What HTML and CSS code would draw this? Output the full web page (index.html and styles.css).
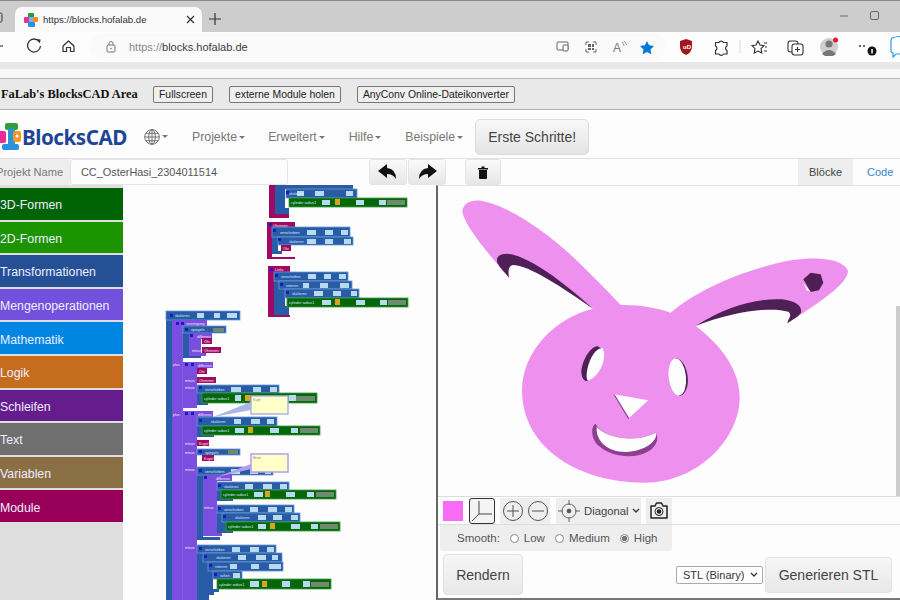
FILE: index.html
```html
<!DOCTYPE html>
<html lang="de">
<head>
<meta charset="utf-8">
<title>BlocksCAD</title>
<link rel="stylesheet" href="styles.css">
</head>
<body>
<div class="tabbar">
  <svg class="tab-stub" width="15" height="25" viewBox="0 0 15 25"><rect x="-6" y="6" width="8" height="9" rx="1.5" fill="none" stroke="#333"/></svg>
  <div class="tab">
    <svg class="favicon" width="14" height="14" viewBox="0 0 14 14"><rect x="4" y="0" width="6" height="5" rx="1" fill="#2c9a3f"/><rect x="0" y="4" width="5" height="6" rx="1" fill="#ea2d9a"/><rect x="9" y="4" width="5" height="5" rx="1" fill="#f28c28"/><rect x="4" y="9" width="7" height="5" rx="1" fill="#2b8fe0"/><rect x="5" y="4" width="4" height="5" fill="#6fb6e8"/></svg>
    <span class="tab-title">https://blocks.hofalab.de</span>
    <svg class="tab-x" width="9" height="9" viewBox="0 0 9 9"><path d="M1 1l7 7M8 1l-7 7" stroke="#333" stroke-width="1.2"/></svg>
  </div>
  <svg class="tab-plus" width="12" height="12" viewBox="0 0 12 12"><path d="M6 0v12M0 6h12" stroke="#333" stroke-width="1.2"/></svg>
  <div class="winbtns">
    <svg width="10" height="10" viewBox="0 0 10 10"><path d="M1 5h8" stroke="#666" stroke-width="1"/></svg>
    <svg width="10" height="10" viewBox="0 0 10 10"><rect x=".5" y=".5" width="8" height="8" rx="1.5" fill="none" stroke="#666"/></svg>
  </div>
</div>
<div class="toolbar">
  <svg class="nav-ico" width="90" height="30" viewBox="0 0 90 30">
    <path d="M-4 14h7" stroke="#444" stroke-width="1.2"/>
    <path d="M39.500 10a6.500 6.500 0 1 0 1 4" fill="none" stroke="#333" stroke-width="1.3"/><path d="M36.500 7l4 .5-.5 4z" fill="#333"/>
    <path d="M63 14l5.500-5 5.500 5v5.500h-3.500v-4h-4v4h-3.500z" fill="none" stroke="#333" stroke-width="1.2" stroke-linejoin="round"/>
  </svg>
  <div class="omni">
    <svg class="lock" width="10" height="12" viewBox="0 0 10 12"><rect x="1" y="4" width="8" height="7" rx="1" fill="none" stroke="#777"/><path d="M3 4V2.500a2 2 0 0 1 4 0V4" fill="none" stroke="#777"/><circle cx="5" cy="7.500" r=".8" fill="#777"/></svg>
    <span class="url"><span class="url-dim">https://</span>blocks.hofalab.de</span>
    <svg class="omni-ico" width="110" height="28" viewBox="555 32 110 28">
      <rect x="557" y="41" width="11" height="8" rx="1" fill="none" stroke="#666"/><rect x="563" y="44" width="5" height="6" rx="1" fill="#fff" stroke="#666"/>
      <path d="M586 44v-3h3M593 41h3v3M596 48v3h-3M589 51h-3v-3" fill="none" stroke="#666"/><rect x="588" y="43" width="3" height="3" fill="#666"/><rect x="592" y="43" width="2" height="3" fill="#666"/><rect x="588" y="47" width="3" height="2" fill="#666"/><rect x="592" y="47" width="2" height="2" fill="#666"/>
      <text class="aa" x="613" y="51">A</text><path d="M622 41q2 2 2 4M624 40q2.500 2 2.500 4" fill="none" stroke="#777" stroke-width=".8"/>
      <path d="M647 40l2.100 4.300 4.900.7-3.500 3.400.8 4.800-4.300-2.300-4.300 2.300.8-4.800-3.500-3.400 4.900-.7z" fill="#0078d4"/>
    </svg>
  </div>
  <svg class="ext-ico" width="235" height="30" viewBox="665 32 235 30">
    <path d="M680 41l6-2 6 2v6q0 5-6 8-6-3-6-8z" fill="#a3161c"/><text class="ub" x="683" y="49">uD</text>
    <path d="M715.500 42.500h3.500a2.500 2.500 0 0 1 4.500 0h3.500v3.500a2.500 2.500 0 0 0 0 4.500v3.500h-3.500a2.500 2.500 0 0 1-4.500 0h-3.500v-3.500a2.500 2.500 0 0 0 0-4.500z" fill="none" stroke="#333" stroke-width="1.200" stroke-linejoin="round"/>
    <path d="M740 40v13" stroke="#d6dbe6" stroke-width="1"/>
    <path d="M758 41l2 4 4 .6-3 3 .8 4.400-3.800-2-3.800 2 .8-4.400-3-3 4-.6zM764 43h3M765 47h2M764 51h3" fill="none" stroke="#333" stroke-width="1.100"/>
    <rect x="788" y="41" width="10" height="11" rx="2.500" fill="none" stroke="#333" stroke-width="1.100"/><rect x="792" y="44" width="11" height="11" rx="2.500" fill="#fff" stroke="#333" stroke-width="1.100"/><path d="M797.500 47v5M795 49.500h5" stroke="#333"/>
    <circle cx="829" cy="47" r="9" fill="#cfcfcf"/><circle cx="829" cy="44" r="3.600" fill="#777"/><path d="M822 54q7-8 14 0l-3 2h-8z" fill="#777"/><circle cx="835.500" cy="40" r="2.500" fill="#ee1b24"/>
    <circle cx="860" cy="46" r="1" fill="#333"/><circle cx="864" cy="46" r="1" fill="#333"/><circle cx="872" cy="51" r="4.500" fill="#111"/><rect x="871.300" y="49" width="1.500" height="4.500" fill="#fff"/>
    <path d="M892 38q8-3 12 0v16h-8l-3 3v-4q-2 0-2-3v-8q0-3 1-4z" fill="#fff" stroke="#2b9be8" stroke-width="1.200"/>
  </svg>
</div>
<div class="fav-gap"></div>
<div class="sitebar">
  <b class="site-title">FaLab's BlocksCAD Area</b>
  <button class="sbtn">Fullscreen</button>
  <button class="sbtn">externe Module holen</button>
  <button class="sbtn">AnyConv Online-Dateikonverter</button>
</div>
<nav class="nav">
  <svg class="logo" width="24" height="30" viewBox="0 0 24 30"><rect x="5" y="1" width="13" height="7" rx="2" fill="#2e9e3e"/><rect x="8" y="7" width="7" height="16" fill="#2a93dc"/><rect x="-3" y="9" width="9" height="12" rx="2" fill="#ea2a98"/><rect x="13" y="9" width="8" height="11" rx="2" fill="#f39a22"/><circle cx="17" cy="14" r="1.500" fill="#fff"/><rect x="2" y="22" width="17" height="6" rx="2" fill="#2a93dc"/></svg>
  <span class="brand">BlocksCAD</span>
  <svg class="globe" width="16" height="16" viewBox="0 0 16 16"><g fill="none" stroke="#666" stroke-width=".9"><circle cx="8" cy="8" r="7.300"/><ellipse cx="8" cy="8" rx="3.300" ry="7.300"/><path d="M8 .7v14.600M.7 8h14.600M1.800 4.300h12.400M1.800 11.700h12.400"/></g></svg><i class="caret"></i>
  <span class="nav-item first">Projekte<i class="caret"></i></span>
  <span class="nav-item">Erweitert<i class="caret"></i></span>
  <span class="nav-item hilfe">Hilfe<i class="caret"></i></span>
  <span class="nav-item">Beispiele<i class="caret"></i></span>
  <button class="start">Erste Schritte!</button>
</nav>
<div class="project">
  <span class="pname">Projekt Name</span>
  <span class="pinput">CC_OsterHasi_2304011514</span>
  <button class="pbtn undo"><svg width="20" height="16" viewBox="0 0 20 16"><path d="M9 0L0 7l9 7v-4q6 0 9 5 0-10-9-11z" fill="#111"/></svg></button>
  <button class="pbtn"><svg width="20" height="16" viewBox="0 0 20 16"><path d="M11 0l9 7-9 7v-4q-6 0-9 5 0-10 9-11z" fill="#111"/></svg></button>
  <button class="pbtn trash"><svg width="10" height="13" viewBox="0 0 10 13"><path d="M0 2h10v1.500H0zM3.500 .5h3V2h-3zM1 4h8v8a1 1 0 0 1-1 1H2a1 1 0 0 1-1-1z" fill="#111"/></svg></button>
  <span class="tab-active">Blöcke</span>
  <span class="tab-code">Code</span>
</div>
<main class="main">
  <aside class="toolbox">
    <div class="cat c1">3D-Formen</div>
    <div class="cat c2">2D-Formen</div>
    <div class="cat c3">Transformationen</div>
    <div class="cat c4">Mengenoperationen</div>
    <div class="cat c5">Mathematik</div>
    <div class="cat c6">Logik</div>
    <div class="cat c7">Schleifen</div>
    <div class="cat c8">Text</div>
    <div class="cat c9">Variablen</div>
    <div class="cat c10">Module</div>
  </aside>
  <section class="workspace">
    <svg class="blocks" width="313" height="415" viewBox="123 185 313 415">
      <!-- group 1 -->
      <path class="mag" d="M269 185h6v29h14v4h-20z"/>
      <path class="blu" d="M275 185h5v26h9v3h-14zM280 185h5v23h4v3h-9z"/>
      <rect class="blu" x="279" y="184" width="74" height="5"/>
      <g class="row"><rect class="blu" x="286" y="189" width="71" height="9"/><rect class="in" x="297" y="191" width="7" height="5"/><rect class="in" x="315" y="191" width="9" height="5"/><rect class="in" x="346" y="191" width="7" height="5"/><text x="289" y="195">skalieren</text></g>
      <g class="row"><rect class="grn" x="289" y="198" width="118" height="9"/><rect class="in" x="322" y="200" width="8" height="5"/><rect class="lk" x="335" y="199" width="5" height="6"/><rect class="in" x="356" y="200" width="8" height="5"/><rect class="in" x="379" y="200" width="7" height="5"/><rect class="gry" x="387" y="200" width="18" height="5"/><text x="291" y="204">cylinder radius1</text></g>
      <!-- group 2 -->
      <path class="mag" d="M267 222h28v6h-23v29h23v2h-28z"/>
      <text class="wt" x="273" y="226.500">Ohrinnen</text>
      <path class="blu" d="M272 237h6v14h4v3h-10z"/>
      <g class="row"><rect class="blu" x="272" y="227" width="78" height="10"/><rect class="in" x="307" y="230" width="9" height="5"/><rect class="in" x="325" y="230" width="8" height="5"/><rect class="in" x="341" y="230" width="7" height="5"/><text x="280" y="233.500">verschieben</text></g>
      <g class="row"><rect class="blu" x="278" y="237" width="75" height="8"/><rect class="in" x="307" y="239" width="9" height="5"/><rect class="in" x="325" y="239" width="8" height="5"/><rect class="in" x="344" y="239" width="7" height="5"/><text x="289" y="242.500">skalieren</text></g>
      <rect class="mag" x="281" y="245" width="10" height="6"/><text class="wt" x="283" y="249.500">Ohr</text>
      <!-- group 3 -->
      <path class="mag" d="M268 266h22v6h-16v43h16v2h-22z"/>
      <text class="wt" x="275" y="270.500">Links</text>
      <path class="blu" d="M274 281h5v28h10v6h-15zM279 289h6v17h4v3h-10z"/>
      <g class="row"><rect class="blu" x="274" y="272" width="74" height="9"/><rect class="in" x="308" y="274" width="8" height="5"/><rect class="in" x="324" y="274" width="7" height="5"/><rect class="in" x="339" y="274" width="7" height="5"/><text x="281" y="278">verschieben</text></g>
      <g class="row"><rect class="blu" x="279" y="281" width="73" height="8"/><rect class="in" x="303" y="283" width="6" height="5"/><rect class="in" x="320" y="283" width="8" height="5"/><rect class="in" x="340" y="283" width="9" height="5"/><text x="286" y="287">rotieren</text></g>
      <g class="row"><rect class="blu" x="285" y="289" width="74" height="9"/><rect class="in" x="314" y="291" width="9" height="5"/><rect class="in" x="333" y="291" width="8" height="5"/><rect class="in" x="351" y="291" width="6" height="5"/><text x="292" y="295">skalieren</text></g>
      <g class="row"><rect class="grn" x="287" y="298" width="121" height="9"/><rect class="in" x="322" y="300" width="9" height="5"/><rect class="lk" x="335" y="299" width="5" height="6"/><rect class="in" x="356" y="300" width="9" height="5"/><rect class="in" x="380" y="300" width="7" height="5"/><rect class="gry" x="388" y="300" width="18" height="5"/><text x="289" y="304">cylinder radius1</text></g>
      <!-- group 4 spine -->
      <rect class="blu" x="166" y="320" width="6" height="280"/>
      <rect class="pur" x="172" y="326" width="11" height="274"/>
      <path class="dash" d="M183 327v273"/>
      <g class="row"><rect class="blu" x="166" y="311" width="74" height="9"/><rect class="in" x="197" y="313" width="7" height="5"/><rect class="in" x="214" y="313" width="6" height="5"/><rect class="in" x="227" y="313" width="10" height="5"/><text x="175" y="317">skalieren</text></g>
      <rect class="pur" x="172" y="320" width="35" height="7"/><text class="wt" x="186" y="325">vereinigung</text>
      <path class="blu" d="M183 332h6v24h12v2h-18z"/>
      <g class="row"><rect class="blu" x="183" y="326" width="43" height="7"/><rect class="gry" x="213" y="328" width="11" height="4"/><text x="191" y="331">spiegeln</text></g>
      <path class="pur" d="M189 333h23v6h-11v14h5v3h-17z"/>
      <text class="wt" x="197" y="337.500">differenz</text>
      <rect class="mag" x="202" y="338" width="10" height="6"/><text class="wt" x="204" y="342.500">Ohr</text>
      <rect class="mag" x="202" y="347" width="19" height="6"/><text class="wt" x="204" y="351.500">Ohrinnen</text>
      <text class="wt" x="192" y="351.500">minus</text>
      <text class="wt" x="173" y="365.500">plus</text>
      <rect class="pur" x="183" y="362" width="14" height="46"/>
      <rect class="pur" x="184" y="362" width="29" height="6"/><text class="wt" x="198" y="366.500">differenz</text>
      <rect class="mag" x="197" y="368" width="10" height="6"/><text class="wt" x="199" y="372.500">Ohr</text>
      <rect class="mag" x="197" y="377" width="19" height="6"/><text class="wt" x="199" y="381.500">Ohrinnen</text>
      <text class="wt" x="185" y="381.500">minus</text>
      <text class="wt" x="185" y="388.500">minus</text>
      <path class="blu" d="M197 385h5v18h6v2h-11z"/>
      <g class="row"><rect class="blu" x="197" y="385" width="82" height="8"/><rect class="in" x="231" y="387" width="10" height="5"/><rect class="in" x="253" y="387" width="8" height="5"/><rect class="in" x="270" y="387" width="7" height="5"/><text x="205" y="391">verschieben</text></g>
      <g class="row"><rect class="grn" x="202" y="393" width="115" height="10"/><rect class="in" x="235" y="395" width="6" height="6"/><rect class="lk" x="245" y="395" width="5" height="6"/><rect class="in" x="289" y="395" width="7" height="6"/><rect class="gry" x="296" y="396" width="19" height="5"/><text x="204" y="400">cylinder radius1</text></g>
      <rect class="pur" x="184" y="411" width="29" height="6"/><rect class="pur" x="183" y="411" width="14" height="189"/>
      <text class="wt" x="198" y="415.500">differenz</text>
      <text class="wt" x="173" y="415.500">plus</text>
      <path class="blu" d="M197 426h5v9h12v2h-17z"/>
      <g class="row"><rect class="blu" x="197" y="417" width="80" height="9"/><rect class="in" x="234" y="419" width="7" height="5"/><rect class="in" x="251" y="419" width="9" height="5"/><rect class="in" x="267" y="419" width="7" height="5"/><text x="211" y="423">skalieren</text></g>
      <g class="row"><rect class="grn" x="202" y="426" width="118" height="9"/><rect class="in" x="235" y="428" width="9" height="5"/><rect class="lk" x="248" y="427" width="5" height="6"/><rect class="in" x="270" y="428" width="9" height="5"/><rect class="in" x="291" y="428" width="7" height="5"/><rect class="gry" x="300" y="428" width="18" height="5"/><text x="204" y="432">cylinder radius1</text></g>
      <rect class="mag" x="197" y="440" width="12" height="6"/><text class="wt" x="199" y="444.500">Kugel</text>
      <text class="wt" x="185" y="444.500">minus</text>
      <g class="row"><rect class="blu" x="197" y="449" width="43" height="6"/><rect class="gry" x="228" y="450" width="10" height="4"/><text x="205" y="453.500">spiegeln</text></g>
      <rect class="mag" x="202" y="455" width="12" height="6"/><text class="wt" x="204" y="459.500">Kugel</text>
      <text class="wt" x="185" y="453.500">minus</text>
      <text class="wt" x="185" y="470.500">minus</text>
      <path class="blu" d="M197 475h6v62h17v3h-23z"/>
      <path class="pur" d="M203 481h14v50h5v5h-19z"/>
      <path class="blu" d="M217 490h4v9h12v2h-16zM217 513h5v18h11v2h-16zM222 522h4v9h-4z"/>
      <g class="row"><rect class="blu" x="197" y="467" width="76" height="8"/><rect class="in" x="231" y="469" width="9" height="5"/><rect class="in" x="250" y="469" width="8" height="5"/><rect class="in" x="265" y="469" width="6" height="5"/><text x="205" y="473">verschieben</text></g>
      <rect class="pur" x="203" y="475" width="29" height="6"/><text class="wt" x="216" y="479.500">differenz</text>
      <text class="wt" x="204" y="509">minus</text>
      <g class="row"><rect class="blu" x="217" y="482" width="72" height="8"/><rect class="in" x="245" y="484" width="8" height="5"/><rect class="in" x="263" y="484" width="9" height="5"/><rect class="in" x="280" y="484" width="7" height="5"/><text x="224" y="488">skalieren</text></g>
      <g class="row"><rect class="grn" x="221" y="490" width="115" height="9"/><rect class="in" x="254" y="492" width="9" height="5"/><rect class="lk" x="265" y="491" width="5" height="6"/><rect class="in" x="286" y="492" width="9" height="5"/><rect class="in" x="307" y="492" width="7" height="5"/><rect class="gry" x="316" y="492" width="18" height="5"/><text x="223" y="496">cylinder radius1</text></g>
      <g class="row"><rect class="blu" x="217" y="505" width="77" height="8"/><rect class="in" x="250" y="507" width="8" height="5"/><rect class="in" x="268" y="507" width="9" height="5"/><rect class="in" x="285" y="507" width="7" height="5"/><text x="224" y="511">verschieben</text></g>
      <g class="row"><rect class="blu" x="222" y="513" width="78" height="9"/><rect class="in" x="258" y="515" width="8" height="5"/><rect class="in" x="273" y="515" width="9" height="5"/><rect class="in" x="291" y="515" width="7" height="5"/><text x="235" y="519">skalieren</text></g>
      <g class="row"><rect class="grn" x="226" y="522" width="114" height="9"/><rect class="in" x="258" y="524" width="8" height="5"/><rect class="lk" x="270" y="523" width="5" height="6"/><rect class="in" x="291" y="524" width="9" height="5"/><rect class="in" x="311" y="524" width="7" height="5"/><rect class="gry" x="320" y="524" width="18" height="5"/><text x="228" y="528">cylinder radius1</text></g>
      <text class="wt" x="185" y="549">minus</text>
      <path class="blu" d="M197 553h6v42h6v5h-12zM203 562h5v30h6v3h-11zM208 571h5v18h6v3h-11z"/>
      <g class="row"><rect class="blu" x="197" y="545" width="79" height="8"/><rect class="in" x="232" y="547" width="8" height="5"/><rect class="in" x="250" y="547" width="9" height="5"/><rect class="in" x="267" y="547" width="7" height="5"/><text x="205" y="551">verschieben</text></g>
      <g class="row"><rect class="blu" x="203" y="553" width="79" height="9"/><rect class="in" x="238" y="555" width="8" height="5"/><rect class="in" x="256" y="555" width="10" height="5"/><rect class="in" x="272" y="555" width="6" height="5"/><text x="216" y="559">skalieren</text></g>
      <g class="row"><rect class="blu" x="208" y="562" width="75" height="9"/><rect class="in" x="230" y="564" width="7" height="5"/><rect class="in" x="251" y="564" width="8" height="5"/><rect class="in" x="269" y="564" width="12" height="5"/><text x="215" y="568">rotieren</text></g>
      <g class="row"><rect class="blu" x="213" y="571" width="29" height="8"/><rect class="in" x="233" y="573" width="7" height="5"/><text x="220" y="577">sehen</text></g>
      <g class="row"><rect class="grn" x="217" y="579" width="114" height="10"/><rect class="in" x="250" y="581" width="9" height="6"/><rect class="lk" x="262" y="581" width="5" height="6"/><rect class="in" x="282" y="581" width="8" height="6"/><rect class="in" x="303" y="581" width="7" height="6"/><rect class="gry" x="311" y="582" width="18" height="5"/><text x="219" y="586">cylinder radius1</text></g>
      <!-- comments -->
      <path class="link" d="M213 417L251 402v8z"/>
      <rect class="note" x="251" y="396" width="37" height="18"/><text class="nt" x="253" y="400.500">Kugel</text>
      <path class="link alt" d="M217 477L251 464v5z"/>
      <rect class="note alt" x="251" y="454" width="37" height="18"/><text class="nt" x="253" y="459">Mund</text>
      <!-- block collapse markers -->
      <g class="mk"><rect x="170" y="314" width="3" height="3"/><rect x="176" y="322" width="3" height="3"/><rect x="181" y="322" width="3" height="3"/><rect x="185" y="328" width="3" height="3"/><rect x="190" y="334" width="3" height="3"/><rect x="185" y="363" width="3" height="3"/><rect x="191" y="363" width="3" height="3"/><rect x="199" y="386" width="3" height="3"/><rect x="185" y="412" width="3" height="3"/><rect x="191" y="412" width="3" height="3"/><rect x="199" y="419" width="3" height="3"/><rect x="199" y="450" width="3" height="3"/><rect x="199" y="469" width="3" height="3"/><rect x="204" y="476" width="3" height="3"/><rect x="218" y="484" width="3" height="3"/><rect x="218" y="507" width="3" height="3"/><rect x="223" y="515" width="3" height="3"/><rect x="199" y="547" width="3" height="3"/><rect x="204" y="555" width="3" height="3"/><rect x="209" y="564" width="3" height="3"/><rect x="214" y="573" width="3" height="3"/><rect x="273" y="229" width="3" height="3"/><rect x="278" y="238" width="3" height="3"/><rect x="269" y="223" width="3" height="3"/><rect x="270" y="268" width="3" height="3"/><rect x="275" y="274" width="3" height="3"/><rect x="280" y="283" width="3" height="3"/><rect x="286" y="291" width="3" height="3"/><rect x="286" y="191" width="3" height="3"/></g>
    </svg>
  </section>
  <section class="viewer">
    <div class="stage">
      <svg class="bunny" width="461" height="312" viewBox="-33 -15 1383 936">
        <path class="pink" d="M40 62C42 35 68 25 100 30C180 45 300 125 400 225C450 275 490 315 515 342C570 340 620 350 665 365C740 300 880 235 1030 207C1110 195 1185 205 1197 240C1195 280 1110 335 1015 397C1018 380 1030 375 1030 358C1000 330 860 340 740 405C820 465 872 540 872 620C872 740 750 875 585 875C400 875 222 780 219 600C219 480 320 380 432 353C340 280 240 222 190 222C175 225 178 245 180 260C120 190 50 110 40 62Z"/>
        <path class="dark" d="M432 353C340 270 240 195 175 188C150 188 140 200 145 215C155 235 170 245 180 260C176 240 178 225 192 222C240 222 340 290 432 353Z"/>
        <path class="dark" d="M740 405C830 345 930 320 1000 325C1040 330 1060 345 1056 365C1045 380 1030 385 1015 397C1020 380 1030 372 1018 362C960 345 840 365 740 405Z"/>
        <path class="dark" d="M1063 265L1085 245L1115 250L1123 275L1110 298L1085 303Z"/>
        <path class="hole" d="M1063 275L1085 303L1073 298Z"/>
        <path class="dark" d="M445 465C420 470 400 510 397 540C397 560 405 572 415 570L465 478Z"/>
        <path class="hole" d="M462 472C470 490 465 525 445 548C430 565 415 572 414 565C408 530 435 465 462 472Z"/>
        <path class="dark" d="M680 502C705 505 720 545 716 580C712 605 700 615 690 615Z"/>
        <ellipse class="hole" cx="685" cy="558" rx="26" ry="56" transform="rotate(-6 685 558)"/>
        <path class="hole" d="M495 610L598 628L538 683Z"/>
        <path class="mid" d="M493 610L498 612L540 680L538 685Z"/>
        <path class="mid" d="M440 698C425 705 425 745 450 765C490 800 560 805 600 780C622 765 630 745 622 725C560 755 480 745 445 708Z"/>
        <path class="hole" d="M443 708C480 745 560 755 622 725C625 750 590 780 530 783C475 783 440 750 443 708Z"/>
      </svg>
      <i class="scroll"></i>
    </div>
    <div class="viewbar">
      <span class="swatch"></span>
      <button class="vbtn axis"><svg width="22" height="22" viewBox="0 0 22 22"><path d="M8 1v13H21M8 14L1 21" fill="none" stroke="#444"/></svg></button>
      <button class="vbtn zoomb"><svg width="22" height="22" viewBox="0 0 22 22"><circle cx="11" cy="11" r="9.500" fill="none" stroke="#555"/><path d="M11 5v12M5 11h12" stroke="#555"/></svg></button>
      <button class="vbtn zoomb"><svg width="22" height="22" viewBox="0 0 22 22"><circle cx="11" cy="11" r="9.500" fill="none" stroke="#555"/><path d="M5 11h12" stroke="#555"/></svg></button>
      <button class="vbtn target"><svg width="22" height="22" viewBox="0 0 22 22"><circle cx="11" cy="11" r="7" fill="none" stroke="#666"/><circle cx="11" cy="11" r="2.300" fill="#555"/><path d="M11 0v5M11 17v5M0 11h5M17 11h5" stroke="#666"/></svg></button>
      <span class="diag">Diagonal<svg class="chev" width="8" height="5" viewBox="0 0 8 5"><path d="M1 1l3 3 3-3" fill="none" stroke="#333" stroke-width="1.300"/></svg></span>
      <button class="vbtn cam"><svg width="18" height="17" viewBox="0 0 18 17"><path d="M1 4h4l1.500-3h5L13 4h4v12H1z" fill="none" stroke="#222" stroke-width="1.500" stroke-linejoin="round"/><circle cx="9" cy="9.500" r="4" fill="none" stroke="#222"/><circle cx="9" cy="9.500" r="2.300" fill="#222"/></svg></button>
    </div>
    <div class="smooth">
      <span>Smooth:</span>
      <label class="opt"><i class="radio"></i>Low</label>
      <label class="opt"><i class="radio"></i>Medium</label>
      <label class="opt"><i class="radio on"></i>High</label>
    </div>
    <div class="render">
      <button class="big rendern">Rendern</button>
      <span class="fmt">STL (Binary)<svg class="chev" width="8" height="5" viewBox="0 0 8 5"><path d="M1 1l3 3 3-3" fill="none" stroke="#333" stroke-width="1.300"/></svg></span>
      <button class="big gen">Generieren STL</button>
    </div>
  </section>
</main>
</body>
</html>
```
FILE: styles.css
```css
* { box-sizing: border-box; }
html, body { margin: 0; padding: 0; }
body { width: 900px; height: 600px; overflow: hidden; background: #fdfdfd; font-family: "Liberation Sans", Arial, sans-serif; color: #555; }
button { font-family: inherit; margin: 0; padding: 0; }
svg { display: block; flex: none; }

.tabbar { height: 32px; background: #cdcdcd; border-top: 1px solid #8a8a8a; display: flex; align-items: flex-end; }
.tab { width: 187px; height: 25px; background: #fafafa; border-radius: 7px 7px 0 0; display: flex; align-items: center; padding: 0 7px 0 9px; color: #333; font-size: 9.6px; }
.favicon { margin-right: 5px; }
.tab-title { flex: 1; }
.tab-plus { margin: 0 0 7px 7px; }
.winbtns { margin: 0 20px 11px auto; display: flex; gap: 21px; align-self: flex-end; }

.toolbar { height: 30px; background: #fdfdfd; display: flex; align-items: center; }
.omni { width: 575px; height: 28px; border-radius: 14px; background: #fafafb; display: flex; align-items: center; padding-left: 16px; }
.lock { margin-right: 13px; }
.url { font-size: 11px; color: #3c3c3c; flex: 1; }
.url-dim { color: #888; }
.aa { font: 12px "Liberation Sans", sans-serif; fill: #777; }
.ub { font: bold 6px "Liberation Sans", sans-serif; fill: #fff; }

.fav-gap { height: 17px; background: linear-gradient(#e8e8e8 0 7px, #f8f8f8 7px 16px, #b5b5b5 16px); }
.sitebar { height: 31px; background: #e9e9e9; border-bottom: 1px solid #b0b0b0; display: flex; align-items: center; padding-left: 1px; }
.site-title { font: bold 12.4px "Liberation Serif", serif; color: #111; width: 152px; }
.sbtn { height: 17px; margin-right: 16px; padding: 0 5px; font-size: 10.4px; color: #222; background: #efefef; border: 1px solid #777; border-radius: 2px; }

.nav { height: 48px; padding-top: 5px; background: #fdfdfd; display: flex; align-items: center; }
.logo { margin-right: -2px; }
.brand { font: bold 20.7px "Noto Sans", sans-serif; color: #1f4597; width: 122px; letter-spacing: -.5px; }
.caret { display: inline-block; width: 0; height: 0; margin-left: 2px; border-top: 3px solid #777; border-left: 3px solid transparent; border-right: 3px solid transparent; vertical-align: middle; }
.nav-item { font-size: 12.3px; color: #777; margin-right: 23px; white-space: nowrap; }
.nav-item.first { margin-left: 24px; }
.nav-item.hilfe { margin-left: 1px; margin-right: 24px; }
.start { width: 114px; height: 36px; margin-left: -11px; font-size: 14px; color: #444; border: 1px solid #ddd; border-radius: 5px; background: linear-gradient(#f8f8f8, #e4e4e4); }

.project { height: 27px; background: #fdfdfd; border-top: 1px solid #e2e2e2; display: flex; align-items: stretch; font-size: 10.9px; }
.pname { width: 74px; margin-left: -4px; display: flex; align-items: center; color: #777; background: #eee; white-space: nowrap; font-size: 11.1px; }
.pinput { width: 218px; border: 1px solid #e4e4e4; border-radius: 3px; display: flex; align-items: center; padding-left: 10px; color: #555; background: #fdfdfd; }
.pbtn { width: 38px; margin-right: 1px; display: flex; align-items: center; justify-content: center; background: linear-gradient(#fafafa, #e6e6e6); border: 1px solid #e4e4e4; border-radius: 3px; }
.pbtn.undo { margin-left: 81px; }
.pbtn.trash { width: 36px; margin-left: 18px; margin-right: 0; }
.tab-active { margin-left: 297px; width: 55px; display: flex; align-items: center; justify-content: center; background: #eee; color: #444; font-size: 11px; }
.tab-code { margin-left: 14px; display: flex; align-items: center; color: #3f86cc; font-size: 11px; }

.main { height: 415px; display: flex; }
.toolbox { width: 123px; background: #dedede; padding-top: 3px; display: flex; flex-direction: column; gap: 2px; }
.cat { height: 31.600px; padding-top: 3px; display: flex; align-items: center; color: #eef; font-size: 12.300px; white-space: nowrap; }
.c1 { background: #006405; } .c2 { background: #1c9400; } .c3 { background: #255096; } .c4 { background: #7451dc; } .c5 { background: #0085e2; }
.c6 { background: #c56d1d; } .c7 { background: #651c8c; } .c8 { background: #6f6f6f; } .c9 { background: #8a6f45; } .c10 { background: #99005a; }

.workspace { width: 313px; background: #fdfdfd; overflow: hidden; }
.blocks text { font: 3.6px "Liberation Sans", sans-serif; fill: #dfe8ff; }
.blocks .wt { fill: #ffe8f8; }
.blu { fill: #285ca6; }
.mag { fill: #a00a62; }
.pur { fill: #7a4fe0; }
.grn { fill: #04680a; }
.in { fill: #b8daf0; }
.gry { fill: #6f8a6f; }
.lk { fill: #d8a520; }
.mk { fill: #1a1ac8; }
.row .blu { stroke: #6a9ad4; stroke-width: .8; }
.row .grn { stroke: #3f9a45; stroke-width: .8; }
.dash { stroke: #b9a4f0; stroke-width: .6; stroke-dasharray: 1 1; fill: none; }
.note { fill: #ffffc8; stroke: #a9b4ea; stroke-width: 1.500; }
.note.alt { stroke: #b79cf0; }
.link { fill: #a9b4ea; }
.link.alt { fill: #b79cf0; }
.blocks .nt { fill: #888; font-size: 3px; }

.viewer { width: 464px; border-left: 2px solid #666; border-top: 1px solid #e2e2e2; border-bottom: 2px solid #777; display: flex; flex-direction: column; background: #fdfdfd; }
.stage { height: 311px; position: relative; border-bottom: 1px solid #ddd; overflow: hidden; }
.pink { fill: #ee90ee; }
.dark { fill: #4e2056; }
.mid { fill: #8c3f8e; }
.hole { fill: #fdfdfd; }
.scroll { position: absolute; right: 0; top: 120px; width: 4px; bottom: 0; background: #ccc; }
.viewbar { height: 28px; display: flex; align-items: center; padding-left: 5px; border-bottom: 1px solid #ddd; }
.swatch { width: 20px; height: 20px; background: #f86cf5; margin-right: 6px; }
.vbtn { height: 26px; border: 0; background: #eee; display: flex; align-items: center; justify-content: center; }
.axis { width: 26px; background: #f4f4f4; border: 1.500px solid #333; border-radius: 3px; margin-right: 5px; }
.zoomb { width: 25px; }
.target { width: 25px; margin-left: 6px; }
.diag { width: 60px; height: 26px; background: #eee; display: flex; align-items: center; gap: 3px; padding-left: 3px; font-size: 11.300px; color: #444; }
.cam { width: 26px; margin-left: 5px; }
.smooth { width: 232px; height: 26px; margin-left: 2px; display: flex; align-items: center; gap: 10px; padding-left: 17px; background: #eee; border-radius: 0 0 3px 3px; font-size: 11.500px; color: #555; }
.opt { display: flex; align-items: center; gap: 5px; }
.radio { width: 9px; height: 9px; border: 1px solid #888; border-radius: 50%; background: #fff; }
.radio.on { background: radial-gradient(#777 0 2.500px, #fff 3px); }
.render { flex: 1; display: flex; align-items: center; padding-left: 5px; }
.big { height: 38px; font-size: 14px; color: #444; background: linear-gradient(#f6f6f6, #e8e8e8); border: 1px solid #e2e2e2; border-radius: 4px; }
.rendern { width: 80px; height: 41px; }
.fmt { width: 87px; height: 18px; margin-left: 153px; display: flex; align-items: center; gap: 6px; padding-left: 6px; border: 1px solid #aaa; border-radius: 2px; background: #fff; font-size: 11px; color: #333; white-space: nowrap; }
.gen { width: 127px; height: 36px; margin-left: 2px; }
```
